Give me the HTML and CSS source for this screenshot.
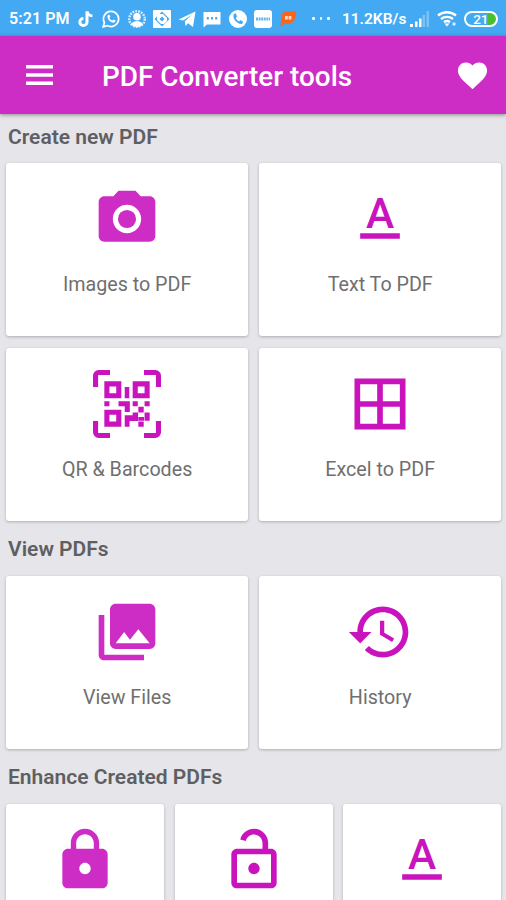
FILE: index.html
```html
<!DOCTYPE html>
<html lang="en">

<head>
    <meta charset="UTF-8">
    <meta name="viewport" content="width=device-width, initial-scale=1.0">
    <title>PDF Converter tools</title>
    <link rel="stylesheet" href="styles.css">
</head>

<body>
    <div class="status">
        <span class="time">5:21 PM</span>
        <div class="notices">
            <!-- music note -->
            <svg viewBox="0 0 18 18"><path d="M10 1.500v10.500a3.600 3.600 0 1 1-3.600-3.600" fill="none" stroke="#fff" stroke-width="3"/><path d="M10 1.500c.6 3 2.600 4.200 5.400 4.300" fill="none" stroke="#fff" stroke-width="2.800"/></svg>
            <!-- chat phone -->
            <svg viewBox="0 0 18 18"><path d="M1.200 16.800l1.200-4.200a7.600 7.600 0 1 1 3 3z" fill="none" stroke="#fff" stroke-width="1.700"/><path d="M6.200 4.800c-2.200 1.800.6 7.600 5.200 8 1.300 0 2.200-1 2.200-2.200l-2.200-1.100-1 1.100c-1.400-.5-2.500-1.600-3-2.900l.9-1-.9-2z" fill="#fff"/></svg>
            <!-- person in a dotted ring -->
            <svg viewBox="0 0 18 18"><circle cx="9" cy="9" r="7.800" fill="none" stroke="#fff" stroke-width="2.400" stroke-dasharray="1.800 1.100" opacity=".8"/><circle cx="9" cy="6.800" r="3.800" fill="#fff"/><path d="M3 14c1.500-2 3.500-2.300 4.500-2.800h3c1 .5 3 .8 4.500 2.800-3 4-9 4-12 0z" fill="#fff"/></svg>
            <!-- gallery -->
            <svg viewBox="0 0 18 18"><rect width="18" height="18" rx="1" fill="#fff"/><path d="M9 1.500L16.500 9 9 16.500 1.500 9z" fill="#43a9f2"/><path d="M5 4h5l4 4v3l-3 3H8l-4-4V7z" fill="#fff"/><path d="M9 6.500L11.500 9 9 11.500 6.500 9z" fill="#43a9f2"/></svg>
            <!-- paper plane -->
            <svg viewBox="0 0 18 18"><path d="M.5 9.500L17.500 1.500 15 17l-5-3.800L7.500 16l-.7-4.700L14 4.800l-9 5.800z" fill="#fff"/></svg>
            <!-- message -->
            <svg viewBox="0 0 18 18"><path d="M.5 2h17v12.500H4L.5 17.500z" fill="#fff"/><path d="M3.800 7h2v2.500h-2zM8 7h2v2.500H8zM12.200 7h2v2.500h-2z" fill="#43a9f2"/></svg>
            <!-- call -->
            <svg viewBox="0 0 18 18"><circle cx="9" cy="9" r="9" fill="#fff"/><path d="M5.500 3.500C2 7 7.500 14.500 13 14l1.200-2.300-2.900-1.600-1.300 1.300C8.500 10.600 7.400 9.500 6.700 8L8 6.700 7 3.600z" fill="#43a9f2"/></svg>
            <svg viewBox="0 0 18 18"><rect width="18" height="18" rx="3" fill="#fff"/><path d="M2 9h14" stroke="#62b8f5" stroke-width="3" stroke-dasharray="2 .6"/></svg>
            <svg viewBox="0 0 18 18"><path d="M1.500 16.500L2.500 6C3 3 5 1.500 8 1.500h9.500L16 8c-1 4-3 5.500-7 5.500H6z" fill="#fb641b"/><path d="M6 7.800h6.500" stroke="#ffd9c6" stroke-width="3.500" stroke-dasharray="2.800 .8"/></svg>
        </div>
        <span class="more"><i></i><i></i><i></i></span>
        <span class="speed">11.2KB/s</span>
        <svg class="signal" viewBox="0 0 20 16"><path d="M0 13h3v3H0zM5 10.500h2.500V16H5zM9 7.500h2.500V16H9z" fill="#fff"/><path d="M12.500 4H15v12h-2.500zM16.500 0H19v16h-2.500z" fill="#fff" opacity=".3"/></svg>
        <svg class="wifi" viewBox="0 0 21 17"><g fill="none" stroke="#fff" stroke-width="2.400"><path d="M1 5.500a14 14 0 0 1 18 0M4 9a9.500 9.500 0 0 1 12 0M7 12.200a5 5 0 0 1 6 0"/></g><path d="M7.500 13.500h5L10 16.500z" fill="#fff"/><circle cx="17" cy="14" r="1.700" fill="#fff" opacity=".8"/></svg>
        <span class="battery">21</span>
    </div>

    <header class="toolbar">
        <svg class="menu" viewBox="0 0 27 20"><path d="M0 0h27v3.600H0zM0 8.200h27v3.600H0zM0 16.400h27V20H0z"/></svg>
        <h1>PDF Converter tools</h1>
        <svg class="heart" viewBox="0 0 24 24"><path d="M12 21.350l-1.450-1.320C5.400 15.360 2 12.280 2 8.500 2 5.420 4.420 3 7.500 3c1.740 0 3.410.810 4.500 2.090C13.090 3.810 14.760 3 16.500 3 19.580 3 22 5.420 22 8.500c0 3.780-3.400 6.860-8.550 11.540L12 21.350z"/></svg>
    </header>

    <main>
        <h2>Create new PDF</h2>
        <div class="cards">
            <div class="card">
                <svg class="solid" viewBox="0 0 24 24"><circle cx="12" cy="12" r="3.200"/><path d="M9 2L7.170 4H4c-1.100 0-2 .9-2 2v12c0 1.100.9 2 2 2h16c1.100 0 2-.9 2-2V6c0-1.100-.9-2-2-2h-3.170L15 2H9zm3 15c-2.760 0-5-2.240-5-5s2.240-5 5-5 5 2.240 5 5-2.240 5-5 5z"/></svg>
                <p>Images to PDF</p>
            </div>
            <div class="card">
                <svg viewBox="0 0 24 24"><text x="12" y="15">A</text><path d="M5 17h14v2H5z"/></svg>
                <p>Text To PDF</p>
            </div>
            <div class="card">
                <svg viewBox="0 0 24 24">
                    <path d="M0 6V2a2 2 0 0 1 2-2h4v1.800H1.800V6zM18 0h4a2 2 0 0 1 2 2v4h-1.800V1.800H18zM0 18v4a2 2 0 0 0 2 2h4v-1.800H1.800V18zM18 24h4a2 2 0 0 0 2-2v-4h-1.800v4.200H18z"/>
                    <path fill-rule="evenodd" d="M4 4h6v6H4zM5.800 5.800v2.400h2.400V5.800zM14 4h6v6h-6zM15.800 5.800v2.400h2.400V5.800zM4 14h6v6H4zM5.800 15.800v2.400h2.400v-2.400z"/>
                    <path d="M11.200 6h1.600v4h-1.600zM4 11h1.800v1.800H4zM9 11h4v3.800h-1.800v-2H9zM14 11h1.800v1.800H14zM18.200 11H20v1.800h-1.800zM16 13h1.900v2H16zM14 15h1.900v3h-3v2h-1.700v-4H14zM18.200 15H20v2.900h-1.800zM16 16.600h2v1.300h-2zM16 18.200h1.900V20H16z"/>
                </svg>
                <p>QR &amp; Barcodes</p>
            </div>
            <div class="card">
                <svg viewBox="0 0 24 24"><path d="M3 3v18h18V3H3zm8 16H5v-6h6v6zm0-8H5V5h6v6zm8 8h-6v-6h6v6zm0-8h-6V5h6v6z"/></svg>
                <p>Excel to PDF</p>
            </div>
        </div>

        <h2>View PDFs</h2>
        <div class="cards">
            <div class="card">
                <svg class="solid" viewBox="0 0 24 24"><path d="M22 16V4c0-1.100-.9-2-2-2H8c-1.100 0-2 .9-2 2v12c0 1.100.9 2 2 2h12c1.100 0 2-.9 2-2zm-11-4l2.030 2.710L16 11l4 5H8l3-4zM2 6v14c0 1.100.9 2 2 2h14v-2H4V6H2z"/></svg>
                <p>View Files</p>
            </div>
            <div class="card">
                <svg viewBox="0 0 24 24"><path d="M13 3c-4.970 0-9 4.030-9 9H1l3.890 3.890.070.140L9 12H6c0-3.870 3.130-7 7-7s7 3.130 7 7-3.130 7-7 7c-1.930 0-3.680-.790-4.940-2.060l-1.420 1.420C8.270 19.990 10.510 21 13 21c4.970 0 9-4.030 9-9s-4.030-9-9-9zm-1 5v5l4.280 2.540.720-1.210-3.500-2.080V8H12z"/></svg>
                <p>History</p>
            </div>
        </div>

        <h2>Enhance Created PDFs</h2>
        <div class="cards three">
            <div class="card">
                <svg class="solid" viewBox="0 0 24 24"><path d="M18 8h-1V6c0-2.760-2.240-5-5-5S7 3.240 7 6v2H6c-1.100 0-2 .9-2 2v10c0 1.100.9 2 2 2h12c1.100 0 2-.9 2-2V10c0-1.100-.9-2-2-2zm-6 9c-1.100 0-2-.9-2-2s.9-2 2-2 2 .9 2 2-.9 2-2 2zm3.100-9H8.900V6c0-1.710 1.390-3.100 3.100-3.100 1.710 0 3.100 1.390 3.100 3.100v2z"/></svg>
            </div>
            <div class="card">
                <svg viewBox="0 0 24 24"><path d="M12 17c1.100 0 2-.9 2-2s-.9-2-2-2-2 .9-2 2 .9 2 2 2zm6-9h-1V6c0-2.760-2.240-5-5-5-2.280 0-4.270 1.540-4.840 3.750l1.940.5C9.440 3.930 10.630 3 12 3c1.650 0 3 1.350 3 3v2H6c-1.100 0-2 .9-2 2v10c0 1.100.9 2 2 2h12c1.100 0 2-.9 2-2V10c0-1.100-.9-2-2-2zm0 12H6V10h12v10z"/></svg>
            </div>
            <div class="card">
                <svg viewBox="0 0 24 24"><text x="12" y="15">A</text><path d="M5 17h14v2H5z"/></svg>
            </div>
        </div>
    </main>
</body>

</html>
```

FILE: styles.css
```css
body {
    margin: 0;
    height: 900px;
    overflow: hidden;
    background: #e6e5ea;
    font-family: Roboto, "Liberation Sans", sans-serif;
}
h1, h2, p {
    margin: 0;
}

/* status bar */
.status {
    display: flex;
    align-items: center;
    box-sizing: border-box;
    height: 36px;
    padding: 1px 8px 0 9px;
    background: #43a9f2;
    color: #fff;
    white-space: nowrap;
}
.time {
    width: 61px;
    font-size: 16px;
    font-weight: 600;
    letter-spacing: .1px;
}
.notices {
    display: flex;
    gap: 7.3px;
    margin-left: 7px;
}
.notices svg {
    width: 18px;
    height: 18px;
}
.more {
    display: flex;
    gap: 5px;
    margin-left: 15px;
}
.more i {
    width: 2.5px;
    height: 2.5px;
    border-radius: 50%;
    background: #fff;
}
.speed {
    width: 68px;
    margin-left: 12px;
    font-size: 15.5px;
    font-weight: 600;
}
.signal {
    width: 20px;
    height: 16px;
}
.wifi {
    width: 21px;
    height: 17px;
    margin-left: 7px;
}
.battery {
    box-sizing: border-box;
    width: 34px;
    height: 16px;
    margin-left: 6px;
    border: 2px solid #fff;
    border-radius: 8px;
    background: linear-gradient(90deg, transparent 74%, #4cc02c 74%);
    background-clip: padding-box;
    font-size: 13.5px;
    font-weight: 500;
    line-height: 12px;
    text-align: center;
}

/* toolbar */
.toolbar {
    display: flex;
    align-items: center;
    position: relative;
    box-sizing: border-box;
    height: 78px;
    padding: 0 16px 0 26px;
    background: #ce2dc5;
    box-shadow: 0 1px 4px rgba(0, 0, 0, .4);
    color: #fff;
    fill: #fff;
}
.menu {
    width: 27px;
    height: 20px;
}
h1 {
    flex: 1;
    margin-left: 49px;
    padding-top: 3px;
    font-size: 27.9px;
    font-weight: 500;
    line-height: 36px;
}
.heart {
    width: 35px;
    height: 35px;
}

/* sections */
main {
    padding: 7.5px 4.7px 0 6px;
}
h2 {
    padding: 0 0 10.5px 2px;
    color: #5f5f62;
    font-size: 21px;
    font-weight: 600;
    line-height: 31px;
}
.cards {
    display: grid;
    grid-template-columns: 1fr 1fr;
    gap: 11.8px 10.8px;
    padding-bottom: 13.2px;
}
.three {
    grid-template-columns: 1fr 1fr 1fr;
}
.card {
    display: flex;
    flex-direction: column;
    align-items: center;
    box-sizing: border-box;
    height: 173.2px;
    padding-top: 22px;
    border-radius: 3px;
    background: #fff;
    box-shadow: 0 1px 3px rgba(0, 0, 0, .25);
}
.card svg {
    width: 68px;
    height: 68px;
    fill: #c914bd;
}
.card .solid {
    fill: #ce2dc5;
}
.card text {
    font-size: 15px;
    font-weight: 500;
    text-anchor: middle;
}
.card p {
    margin-top: 20px;
    color: #6f6f6f;
    font-size: 19.7px;
    line-height: 24px;
}
```
